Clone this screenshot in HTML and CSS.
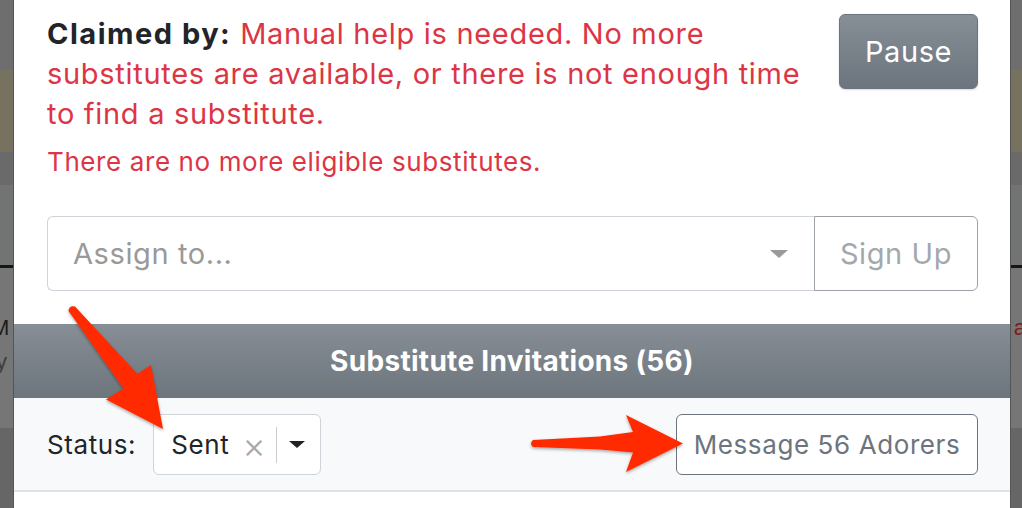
FILE: index.html
```html
<!DOCTYPE html>
<html>
<head>
<meta charset="utf-8">
<link rel="stylesheet" href="styles.css">
</head>
<body>
<div class="page">
  <div class="stripe s-top"></div>
  <div class="stripe s-alert"></div>
  <div class="stripe s-gap"></div>
  <div class="stripe s-nav"></div>
  <div class="stripe s-rule"></div>
  <div class="stripe s-list">
    <div class="bg-row">
      <span class="bg-m">M</span>
      <span class="bg-a">a</span>
    </div>
    <div class="bg-row2"><span class="bg-y">y</span></div>
  </div>
  <div class="stripe s-foot"></div>
</div>

<div class="modal">
  <div class="modal-body">
    <div class="claim-row">
      <div class="claim-text">
        <p class="claimed"><strong>Claimed by:</strong> <span class="danger">Manual help is needed. No more<br>substitutes are available, or there is not enough time<br>to find a substitute.</span></p>
        <p class="danger note">There are no more eligible substitutes.</p>
      </div>
      <button class="btn-pause">Pause</button>
    </div>
    <div class="assign-group">
      <div class="assign-select">
        <span class="placeholder">Assign to...</span>
        <span class="caret caret-grey"></span>
      </div>
      <button class="btn-signup">Sign Up</button>
    </div>
  </div>
  <div class="inv-header">Substitute Invitations (56)</div>
  <div class="filter-row">
    <div class="status">
      <span class="status-label">Status:</span>
      <div class="status-select">
        <span class="sel-value">Sent</span>
        <span class="sel-clear">×</span>
        <span class="sel-sep"></span>
        <span class="caret caret-dark"></span>
      </div>
    </div>
    <button class="btn-message">Message 56 Adorers</button>
  </div>
</div>

<svg class="arrows" width="1022" height="508" viewBox="0 0 1022 508">
  <defs>
    <filter id="sh" x="-20%" y="-20%" width="140%" height="140%">
      <feDropShadow dx="0" dy="1.5" stdDeviation="1.5" flood-color="#000" flood-opacity="0.35"/>
    </filter>
  </defs>
  <path filter="url(#sh)" fill="#ff2a00" d="M68.5 311 Q69 305 75 306.5 L137.5 374 L151 365 L163 429 L106 399.5 L123.5 388.5 Z"/>
  <path filter="url(#sh)" fill="#ff2a00" d="M533 447 Q529 443.5 533 440 L600 436.5 L633 432 L626 415 L683 443.5 L626 472 L633 452.5 L600 449.5 Z"/>
</svg>
</body>
</html>
```

FILE: styles.css
```css
* { box-sizing: border-box; }

html, body {
  margin: 0;
  padding: 0;
  width: 1022px;
  height: 508px;
  overflow: hidden;
}

body {
  font-family: "Inter", "Liberation Sans", sans-serif;
  background: #6b6b6b;
  position: relative;
}

/* dimmed page behind the modal */
.page {
  display: flex;
  flex-direction: column;
}
.stripe { width: 100%; }
.s-top { height: 70px; background: #6e6e6e; }
.s-alert { height: 82px; background: #76725f; }
.s-gap { height: 33px; background: #6a6a6a; }
.s-nav { height: 80px; background: #727473; }
.s-rule { height: 3px; background: #161616; }
.s-list { height: 160px; background: #767676; padding-top: 47px; }
.s-foot { height: 80px; background: #666666; }

.bg-row {
  display: flex;
  justify-content: space-between;
  font-size: 22px;
  line-height: 26px;
  font-family: "Liberation Sans", sans-serif;
}
.bg-m { margin-left: -9px; color: #1c1c1c; }
.bg-a { margin-right: -4px; color: #7a1c22; }
.bg-row2 {
  font-size: 22px;
  line-height: 26px;
  margin-top: 8px;
  font-family: "Liberation Sans", sans-serif;
}
.bg-y { margin-left: -4px; color: #3d3d3d; }

/* modal */
.modal {
  position: absolute;
  left: 13px;
  top: -2px;
  width: 998px;
  height: 520px;
  background: #fff;
  border: 1px solid #555;
  border-top: none;
}

.modal-body {
  padding: 16px 32px 0 33px;
}

.claim-row {
  display: flex;
  justify-content: space-between;
  align-items: flex-start;
}

.claim-text p { margin: 0; }

.claimed {
  font-size: 29px;
  line-height: 40px;
  letter-spacing: 0.7px;
  color: #212529;
}
.claimed strong { font-weight: 700; letter-spacing: 1.5px; }
.danger { color: #dc3545; }
.note {
  font-size: 26px;
  line-height: 40px;
  letter-spacing: 0.6px;
  margin-top: 8px !important;
}

.btn-pause {
  width: 139px;
  height: 75px;
  border: 1px solid #6c757d;
  border-radius: 6px;
  background: linear-gradient(#868e96, #6c757d);
  color: #fff;
  font-family: inherit;
  font-size: 29px;
  letter-spacing: 0.6px;
  padding: 0;
  box-shadow: 0 1px 2px rgba(0,0,0,0.15);
}

.assign-group {
  display: flex;
  margin-top: 34px;
  height: 75px;
}

.assign-select {
  flex: 1;
  display: flex;
  align-items: center;
  justify-content: space-between;
  border: 1.5px solid #cfd4da;
  border-right: none;
  border-radius: 6px 0 0 6px;
  padding: 0 26px 0 25px;
}
.placeholder {
  font-size: 29px;
  letter-spacing: 0.6px;
  color: #999999;
}

.caret {
  width: 0;
  height: 0;
  border-left: 9px solid transparent;
  border-right: 9px solid transparent;
  border-top: 8px solid #999;
}
.caret-grey { border-top-color: #9a9a9a; }
.caret-dark {
  border-left-width: 8px;
  border-right-width: 8px;
  border-top: 7px solid #222;
}

.btn-signup {
  width: 164px;
  border: 1.5px solid #9ba1a6;
  border-radius: 0 6px 6px 0;
  background: #fff;
  color: #a3a8ad;
  font-family: inherit;
  font-size: 29px;
  letter-spacing: 0.6px;
  padding: 0;
}

.inv-header {
  margin-top: 33px;
  height: 74px;
  background: linear-gradient(#878e95, #6d757d);
  color: #fff;
  font-weight: 700;
  font-size: 28px;
  letter-spacing: 0.3px;
  display: flex;
  align-items: center;
  justify-content: center;
}

.filter-row {
  height: 94px;
  background: #f8f9fa;
  border-bottom: 2px solid #dfe3e7;
  display: flex;
  align-items: center;
  justify-content: space-between;
  padding: 1px 32px 0 33px;
}

.status {
  display: flex;
  align-items: center;
  gap: 17px;
}
.status-label {
  font-size: 26px;
  letter-spacing: 0.6px;
  color: #212529;
}

.status-select {
  display: flex;
  align-items: center;
  height: 61px;
  width: 168px;
  background: #fff;
  border: 1.5px solid #cfd4da;
  border-radius: 6px;
  padding: 0 0 0 17px;
}
.sel-value {
  font-size: 26px;
  letter-spacing: 0.6px;
  color: #212529;
}
.sel-clear {
  margin-left: 13px;
  font-size: 36px;
  color: #a8a8a8;
  line-height: 1;
  font-weight: 300;
}
.sel-sep {
  width: 1.5px;
  height: 36px;
  background: #cccccc;
  margin-left: 10px;
  margin-right: 12px;
}

.btn-message {
  height: 61px;
  width: 302px;
  border: 1.5px solid #6c757d;
  border-radius: 6px;
  background: #fff;
  color: #6c757d;
  font-family: inherit;
  font-size: 26px;
  letter-spacing: 0.6px;
  padding: 0;
}

.arrows {
  position: absolute;
  left: 0;
  top: 0;
  pointer-events: none;
}
```
